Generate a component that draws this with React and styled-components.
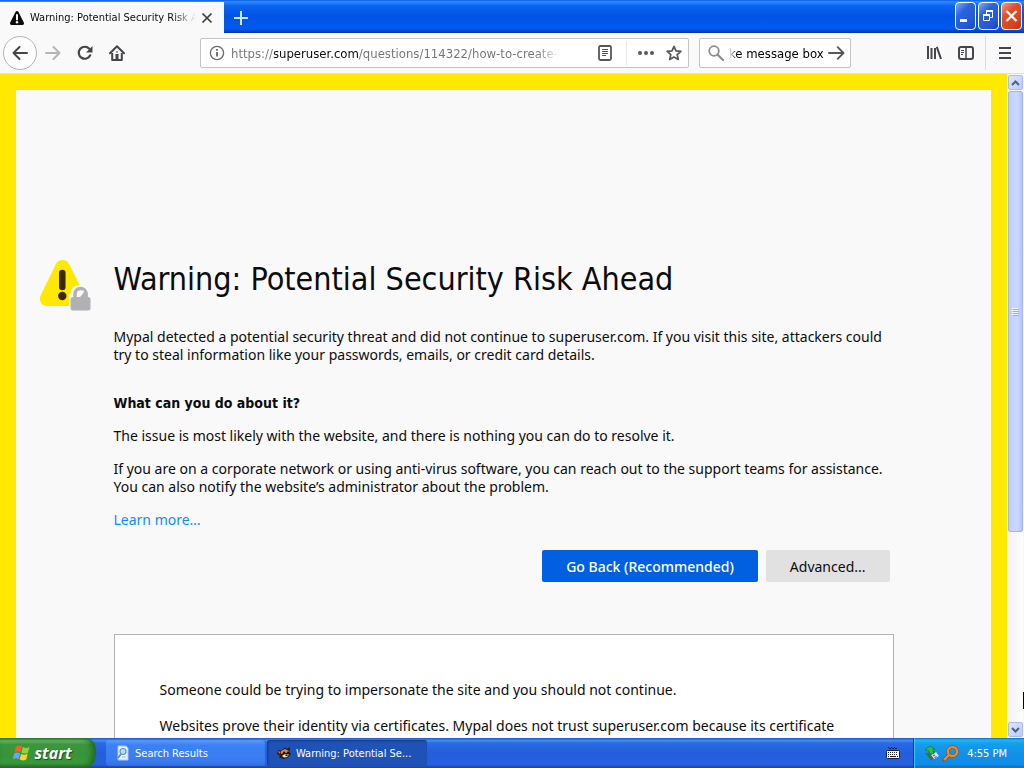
import styled, { createGlobalStyle } from "styled-components";

function App() {
  return (
    <Desktop>
      <GlobalStyle />
      <TitleBar>
        <Tab>
          <AlertIcon />
          <TabTitle>Warning: Potential Security Risk Ahead</TabTitle>
          <TabClose aria-label="Close tab">
            <svg width="12" height="12" viewBox="0 0 12 12">
              <path d="M1.5 1.5l9 9M10.5 1.5l-9 9" stroke="#3c3c40" strokeWidth="1.7" />
            </svg>
          </TabClose>
        </Tab>
        <NewTab aria-label="New tab">
          <svg width="14" height="14" viewBox="0 0 14 14">
            <path d="M7 0v14M0 7h14" stroke="#cfe6ff" strokeWidth="2" />
          </svg>
        </NewTab>
        <WindowButtons>
          <WindowButton aria-label="Minimize">
            <svg width="19" height="26" viewBox="0 0 19 26">
              <path d="M4 17.500h7" stroke="#fff" strokeWidth="3" />
            </svg>
          </WindowButton>
          <WindowButton aria-label="Restore">
            <svg width="19" height="26" viewBox="0 0 19 26" fill="none" stroke="#fff">
              <path d="M7.5 11V8.5h6v6H11" />
              <path d="M7 8h7" strokeWidth="2" />
              <path d="M4.500 11.500h6v6h-6z" />
              <path d="M4 12h7" strokeWidth="2" />
            </svg>
          </WindowButton>
          <WindowButton aria-label="Close" $close>
            <svg width="19" height="26" viewBox="0 0 19 26">
              <path d="M4.500 8l10 10M14.500 8l-10 10" stroke="#fff" strokeWidth="2.200" />
            </svg>
          </WindowButton>
        </WindowButtons>
      </TitleBar>

      <Toolbar>
        <BackButton aria-label="Back">
          <svg width="18" height="16" viewBox="0 0 18 16" fill="none" stroke="#46464a" strokeWidth="2">
            <path d="M16 8H2.500M8.500 2L2.500 8l6 6" strokeLinecap="round" strokeLinejoin="round" />
          </svg>
        </BackButton>
        <ToolButton aria-label="Forward">
          <svg width="18" height="16" viewBox="0 0 18 16" fill="none" stroke="#b5b5b7" strokeWidth="2">
            <path d="M2 8h13.500M9.500 2l6 6-6 6" strokeLinecap="round" strokeLinejoin="round" />
          </svg>
        </ToolButton>
        <ToolButton aria-label="Reload">
          <svg width="16" height="16" viewBox="0 0 16 16" fill="none">
            <path d="M13.200 10.300A6 6 0 1 1 12.300 3.800" stroke="#46464a" strokeWidth="2.200" strokeLinecap="round" />
            <path d="M15.500 1v6.500H9z" fill="#46464a" />
          </svg>
        </ToolButton>
        <ToolButton aria-label="Home">
          <svg width="16" height="16" viewBox="0 0 16 16" fill="none" stroke="#46464a">
            <path d="M1 8.200L8 1.300l7 6.900" strokeWidth="2" strokeLinecap="round" strokeLinejoin="round" />
            <path d="M3.200 8v7h9.600V8" strokeWidth="2" strokeLinejoin="round" />
            <path d="M6.500 9h3v6h-3z" fill="#46464a" stroke="none" />
            <path d="M7 7h2" />
          </svg>
        </ToolButton>
        <Spacer />
        <UrlBar>
          <FieldButton aria-label="Site information">
            <svg width="16" height="16" viewBox="0 0 16 16" fill="none" stroke="#6b6b6f">
              <circle cx="8" cy="8" r="6.600" strokeWidth="1.300" />
              <path d="M8 7v4.500M8 4v1.700" strokeWidth="1.900" />
            </svg>
          </FieldButton>
          <UrlInput aria-label="Address" defaultValue="https://superuser.com/questions/114322/how-to-create-a-fake-message-box" />
          <FieldButton aria-label="Reader view" $wide>
            <svg width="16" height="16" viewBox="0 0 16 16" fill="none" stroke="#58585c">
              <rect x="2" y="1" width="12" height="14" rx="1.500" strokeWidth="1.800" />
              <path d="M5 4.500h6M5 6.500h6M5 8.500h6M5 10.500h4" />
            </svg>
          </FieldButton>
          <FieldDivider />
          <FieldButton aria-label="Page actions">
            <svg width="18" height="6" viewBox="0 0 18 6" fill="#58585c">
              <circle cx="3" cy="3" r="2" />
              <circle cx="9" cy="3" r="2" />
              <circle cx="15" cy="3" r="2" />
            </svg>
          </FieldButton>
          <FieldButton aria-label="Bookmark this page">
            <svg width="16" height="16" viewBox="0 0 16 16">
              <path
                d="M8 1.300l2 4.500 4.900.5-3.700 3.300 1.100 4.900L8 12l-4.300 2.500 1.100-4.900L1.100 6.300 6 5.800z"
                fill="none"
                stroke="#58585c"
                strokeWidth="1.700"
                strokeLinejoin="round"
              />
            </svg>
          </FieldButton>
        </UrlBar>
        <SearchBar>
          <svg width="16" height="16" viewBox="0 0 16 16" fill="none" stroke="#8c8c90">
            <circle cx="6" cy="6" r="4.800" strokeWidth="1.800" />
            <path d="M9.500 9.500l5.500 5.500" strokeWidth="2.200" strokeLinecap="round" />
          </svg>
          <SearchInput aria-label="Search" defaultValue="ke message box" />
          <SearchGo aria-label="Go">
            <svg width="17" height="14" viewBox="0 0 17 14" fill="none" stroke="#58585c" strokeWidth="1.900">
              <path d="M1 7h14.500M9.700 1.200L15.500 7l-5.800 5.800" strokeLinecap="round" strokeLinejoin="round" />
            </svg>
          </SearchGo>
        </SearchBar>
        <Spacer />
        <ToolButton aria-label="Library">
          <svg width="16" height="16" viewBox="0 0 16 16" stroke="#46464a" strokeWidth="2" fill="none">
            <path d="M2 1v13M5.500 3v11M9 3v11M10.800 1.800L15 14" />
          </svg>
        </ToolButton>
        <ToolButton aria-label="Sidebars">
          <svg width="16" height="14" viewBox="0 0 16 14" stroke="#46464a" fill="none">
            <rect x="1" y="1" width="14" height="12" rx="2" strokeWidth="2" />
            <path d="M8 1v12" strokeWidth="1.500" />
            <path d="M3 4.500h3M3 6.500h3M3 8.500h2" />
          </svg>
        </ToolButton>
        <ToolDivider />
        <ToolButton aria-label="Menu">
          <svg width="14" height="12" viewBox="0 0 14 12" stroke="#46464a" strokeWidth="2">
            <path d="M1 1h12M1 6h12M1 11h12" />
          </svg>
        </ToolButton>
      </Toolbar>

      <Viewport>
        <Page>
          <IconCell>
            <InsecureIcon />
          </IconCell>
          <Content>
            <Title>Warning: Potential Security Risk Ahead</Title>
            <Text>
              Mypal detected a potential security threat and did not continue to superuser.com. If you
              visit this site, attackers could try to steal information like your passwords, emails, or
              credit card details.
            </Text>
            <Subtitle>What can you do about it?</Subtitle>
            <Text>The issue is most likely with the website, and there is nothing you can do to resolve it.</Text>
            <Text>
              If you are on a corporate network or using anti-virus software, you can reach out to the
              support teams for assistance. You can also notify the website’s administrator about the
              problem.
            </Text>
            <LearnMore href="#learn-more">Learn more…</LearnMore>
            <ButtonRow>
              <PageButton $primary>Go Back (Recommended)</PageButton>
              <PageButton>Advanced...</PageButton>
            </ButtonRow>
            <AdvancedPanel>
              <Text>Someone could be trying to impersonate the site and you should not continue.</Text>
              <Text>
                Websites prove their identity via certificates. Mypal does not trust superuser.com because
                its certificate issuer is unknown, the certificate is self-signed, or the server is not
                sending the correct intermediate certificates.
              </Text>
            </AdvancedPanel>
          </Content>
        </Page>
        <ScrollBar>
          <ScrollButton aria-label="Scroll up">
            <svg width="9" height="6" viewBox="0 0 9 6">
              <path d="M1 5l3.500-3.500L8 5" fill="none" stroke="#4d6185" strokeWidth="2" />
            </svg>
          </ScrollButton>
          <ScrollTrack>
            <ScrollThumb>
              <svg width="7" height="8" viewBox="0 0 7 8">
                <path d="M0 .5h6M0 2.500h6M0 4.500h6M0 6.500h6" stroke="#eef4fe" />
                <path d="M1 1.500h6M1 3.500h6M1 5.500h6M1 7.500h6" stroke="#8cb0f8" />
              </svg>
            </ScrollThumb>
          </ScrollTrack>
          <ScrollButton aria-label="Scroll down">
            <svg width="9" height="6" viewBox="0 0 9 6">
              <path d="M1 1l3.500 3.500L8 1" fill="none" stroke="#4d6185" strokeWidth="2" />
            </svg>
          </ScrollButton>
          <EdgeMark />
        </ScrollBar>
      </Viewport>

      <TaskBar>
        <StartButton>
          <WindowsLogo />
          start
        </StartButton>
        <TaskItem>
          <SearchDocIcon />
          Search Results
        </TaskItem>
        <TaskItem $active>
          <MypalIcon />
          Warning: Potential Se...
        </TaskItem>
        <LanguageBar>
          <KeyboardIcon />
        </LanguageBar>
        <Tray>
          <UsbIcon />
          <MagnifierIcon />
          <Clock>4:55 PM</Clock>
        </Tray>
      </TaskBar>
    </Desktop>
  );
}
export default App;

function AlertIcon() {
  return (
    <svg width="16" height="16" viewBox="0 0 16 16">
      <path d="M8 1c.7 0 1.200.4 1.500 1l5.300 10.600c.6 1.200-.1 2.400-1.400 2.400H2.600c-1.300 0-2-1.200-1.400-2.400L6.500 2C6.800 1.400 7.300 1 8 1z" fill="#0c0c0d" />
      <path d="M8 5v4.500" stroke="#fff" strokeWidth="2" strokeLinecap="round" />
      <circle cx="8" cy="12.300" r="1.200" fill="#fff" />
    </svg>
  );
}

function InsecureIcon() {
  return (
    <svg width="51" height="53" viewBox="0 0 51 53">
      <path d="M22.500 1c3 0 5.300 1.500 6.700 4.200L44.500 36c2.600 5.500-.8 11-6.500 11H7C1.300 47-1.600 41.500.8 36L15.800 5.200C17.200 2.500 19.500 1 22.500 1z" fill="#ffe900" />
      <path d="M22.300 14v14" stroke="#3e2800" strokeWidth="6.500" strokeLinecap="round" />
      <circle cx="22.300" cy="37" r="4.200" fill="#3e2800" />
      <path d="M29 53V37c0-1.700.8-2.500 2-3 0-5 3-8 9.500-8H51v27z" fill="#f9f9fa" />
      <path d="M35 39v-4a5.500 5.500 0 0 1 11 0v4" fill="none" stroke="#b1b1b3" strokeWidth="3.500" />
      <path d="M40 38l5-6 2.500 1v5z" fill="#b1b1b3" />
      <path d="M39 37.500l4.500-6" stroke="#f9f9fa" strokeWidth="1.500" />
      <rect x="30.500" y="38" width="20" height="13.500" rx="2.500" fill="#b1b1b3" />
    </svg>
  );
}

function WindowsLogo() {
  return (
    <svg width="18" height="18" viewBox="0 0 18 18">
      <path d="M3 2.500c2-1.300 4-1.200 6 0L7.500 8.300c-2-1.100-4-1.200-6 .1z" fill="#f0602a" />
      <path d="M9.800 3c2 1.200 4.200 1.200 6.700 0L15 8.700c-2.500 1.200-4.600 1.200-6.600.1z" fill="#8fd23c" />
      <path d="M1.200 9.500c2-1.300 4-1.200 6-.1l-1.500 5.700c-2-1.100-4-1.100-6 .1z" fill="#6ba3f5" />
      <path d="M8.100 9.900c2 1.100 4.100 1.100 6.600-.1l-1.500 5.700c-2.500 1.200-4.600 1.200-6.600.1z" fill="#fcd22c" />
    </svg>
  );
}

function SearchDocIcon() {
  return (
    <svg width="16" height="16" viewBox="0 0 16 16">
      <path d="M3 1h8l2 2v12H3z" fill="#f0f6ff" stroke="#a8c4ec" />
      <circle cx="8" cy="6.500" r="3" fill="#b9dcfa" stroke="#5d8fd0" strokeWidth="1.200" />
      <path d="M6 9l-3 4" stroke="#5d8fd0" strokeWidth="1.800" />
      <path d="M7 12h4" stroke="#8fb0df" />
    </svg>
  );
}

function MypalIcon() {
  return (
    <svg width="16" height="16" viewBox="0 0 16 16">
      <path d="M2 5.500L6 5l3-2.500L11 4l3-2-.5 5 1.500 2-3 3.500-4 1.500-5-1.500 1-2-3-1.500z" fill="#2b1b10" />
      <path d="M5 6l4-2 4 2-1.500 2-3-.5L5 9z" fill="#cf8b45" />
      <path d="M6 11l3-2 4 .5-2 2.500-3 .5z" fill="#f3e3cb" />
      <path d="M2 6l3 1-2 2z" fill="#e06b25" />
      <circle cx="8" cy="7.500" r="1" fill="#110b08" />
      <circle cx="12" cy="7.500" r="1" fill="#110b08" />
      <path d="M9.500 9.500h2v1.500h-2z" fill="#110b08" />
    </svg>
  );
}

function KeyboardIcon() {
  return (
    <svg width="14" height="14" viewBox="0 0 14 14">
      <path d="M2 1.500h1M5 1.500h1M8 1.500h1M3 2.500h2M6 2.500h2M9 2.500h2" stroke="#0b1c46" />
      <rect x=".5" y="4.500" width="13" height="8" rx="1" fill="#f4f4ec" stroke="#10204a" />
      <path d="M2 6.500h10M2 8.500h10" stroke="#222" strokeDasharray="1 1" />
      <path d="M2 10.500h1M4 10.500h6M11 10.500h1" stroke="#222" />
    </svg>
  );
}

function UsbIcon() {
  return (
    <svg width="16" height="16" viewBox="0 0 16 16">
      <path d="M3 8l7-2 5 5-8 4.500z" fill="#50616e" />
      <path d="M7 10l5-3 3 4-5 3z" fill="#d7e2e8" />
      <path d="M9 11l2-1M10.500 12.500l2-1" stroke="#455" />
      <path d="M1 5l5-4 5 3-2 .5 1 4-4 1-1-3.500z" fill="#35bd35" stroke="#116e26" strokeWidth=".6" />
      <path d="M2 8l5 6" stroke="#217f48" strokeWidth="1.500" />
    </svg>
  );
}

function MagnifierIcon() {
  return (
    <svg width="17" height="17" viewBox="0 0 17 17" fill="none">
      <path d="M7 10l-5 5" stroke="#a84f0b" strokeWidth="3.500" strokeLinecap="round" />
      <circle cx="10.500" cy="6.500" r="4.600" stroke="#a84f0b" strokeWidth="3.200" />
      <circle cx="10.500" cy="6.500" r="4.600" stroke="#f68b24" strokeWidth="2" />
      <path d="M7.500 9.500L2 15" stroke="#f68b24" strokeWidth="2" />
    </svg>
  );
}

const GlobalStyle = createGlobalStyle`
  :root {
    --ui-font: "DejaVu Sans Condensed", "Noto Sans", sans-serif;
    --text-font: "Noto Sans", sans-serif;
    --chrome: #f9f9fa;
    --yellow: #ffe900;
  }

  * {
    box-sizing: border-box;
  }

  body {
    margin: 0;
    font-family: var(--ui-font);
    color: #0c0c0d;
  }

  button {
    display: flex;
    align-items: center;
    justify-content: center;
    margin: 0;
    padding: 0;
    border: none;
    background: none;
    font-family: inherit;
  }

  input {
    min-width: 0;
    padding: 0;
    border: none;
    outline: none;
    background: none;
    font-family: inherit;
  }

  svg {
    flex: none;
  }
`;

const Desktop = styled.div`
  display: flex;
  flex-direction: column;
  height: 100vh;
  overflow: hidden;
`;

const TitleBar = styled.header`
  flex: none;
  display: flex;
  height: 33px;
  padding-top: 2px;
  background: linear-gradient(#0a5ae8 0%, #2f8bff 5%, #0a63f0 18%, #0054e3 50%, #005af0 85%, #0049d0 94%, #00309c 100%);
`;

const Tab = styled.div`
  display: flex;
  align-items: center;
  width: 224px;
  padding: 0 11px 0 9px;
  background: var(--chrome);
`;

const TabTitle = styled.span`
  flex: 1;
  margin: 0 5px;
  overflow: hidden;
  white-space: nowrap;
  font-size: 11px;
  mask-image: linear-gradient(to left, transparent, #000 24px);
`;

const TabClose = styled.button`
  width: 12px;
  height: 12px;
`;

const NewTab = styled.button`
  width: 34px;
`;

const WindowButtons = styled.div`
  display: flex;
  gap: 2px;
  margin-left: auto;
  padding-right: 2px;
`;

const WindowButton = styled.button`
  && {
    width: 21px;
    height: 28px;
    border: 1px solid #fff;
    border-radius: 4px;
    background: ${(p) =>
      p.$close
        ? "linear-gradient(135deg, #f0a088, #e0502c 35%, #d8431c 75%, #b83410)"
        : "linear-gradient(135deg, #7fa8f8, #2a62dc 35%, #2458d6 75%, #1746b8)"};
  }
`;

const Toolbar = styled.nav`
  flex: none;
  display: flex;
  align-items: center;
  height: 41px;
  padding: 0 3px;
  background: var(--chrome);
  border-bottom: 1px solid #e6e2c4;
`;

const ToolButton = styled.button`
  width: 32px;
  height: 32px;
`;

const BackButton = styled.button`
  && {
    width: 34px;
    height: 34px;
    border: 1px solid #b4b4b6;
    border-radius: 50%;
    background: #fdfdfe;
  }
`;

const Spacer = styled.div`
  width: 67px;
`;

const ToolDivider = styled.div`
  width: 1px;
  height: 34px;
  margin: 0 3px;
  background: #dcdcde;
`;

const Field = styled.div`
  display: flex;
  align-items: center;
  height: 30px;
  border: 1px solid #c4c4c6;
  border-radius: 2px;
  background: #fff;
`;

const UrlBar = styled(Field)`
  flex: 1;
  padding-left: 2px;
`;

const FieldButton = styled.button`
  width: ${(p) => (p.$wide ? "42px" : "28px")};
  height: 28px;
`;

/* the host name is darker than the rest of the address */
const UrlInput = styled.input`
  flex: 1;
  height: 28px;
  font-size: 13px;
  color: #737377;

  && {
    background: linear-gradient(to right, #737377 43px, #0c0c0d 43px, #0c0c0d 127px, #737377 127px);
    background-clip: text;
    -webkit-text-fill-color: transparent;
  }
  mask-image: linear-gradient(to left, transparent 24px, #000 48px);
`;

const FieldDivider = styled.div`
  width: 1px;
  height: 24px;
  margin-right: 5px;
  background: #e8e8ea;
`;

const SearchBar = styled(Field)`
  width: 152px;
  margin-left: 10px;
  padding: 0 5px 0 8px;
`;

const SearchInput = styled.input`
  flex: 1;
  height: 28px;
  margin-left: 5px;
  font-size: 13px;
  mask-image: linear-gradient(to right, transparent, #000 8px);
`;

const SearchGo = styled.button`
  width: 18px;
  height: 28px;
`;

const Viewport = styled.main`
  position: relative;
  flex: 1;
  display: flex;
  min-height: 0;
  overflow: hidden;
`;

const Page = styled.div`
  flex: 1;
  align-self: flex-start;
  display: grid;
  grid-template-columns: 1fr minmax(0, 780px) 1fr;
  padding: 169px 0 60px;
  border: 16px solid var(--yellow);
  background: var(--chrome);
  font-family: var(--text-font);
`;

const IconCell = styled.div`
  display: flex;
  justify-content: flex-end;
  align-items: flex-start;
  padding-right: 23px;
`;

const Content = styled.div`
  display: flex;
  flex-direction: column;
`;

const Title = styled.h1`
  margin: 0 0 29px;
  font-family: var(--ui-font);
  font-size: 32px;
  font-weight: 400;
  line-height: 40px;
`;

const Text = styled.p`
  margin: 0 0 15px;
  font-size: 14px;
  line-height: 18px;
`;

const Subtitle = styled.h2`
  margin: 15px 0;
  font-family: var(--ui-font);
  font-size: 14px;
  font-weight: 700;
  line-height: 18px;
`;

const LearnMore = styled.a`
  align-self: flex-start;
  font-size: 14px;
  line-height: 18px;
  color: #0a8dff;
  text-decoration: none;
`;

const ButtonRow = styled.div`
  display: flex;
  justify-content: flex-end;
  gap: 8px;
  margin: 21px 4px 52px 0;
`;

const PageButton = styled.button`
  && {
    height: 32px;
    padding: 0 24px;
    border-radius: 2px;
    background: ${(p) => (p.$primary ? "#0060df" : "#e1e1e2")};
    color: ${(p) => (p.$primary ? "#fff" : "#0c0c0d")};
    font-size: 14px;
    font-weight: ${(p) => (p.$primary ? 500 : 400)};
  }
`;

const AdvancedPanel = styled.section`
  padding: 46px 45px 30px;
  border: 1px solid #b1b1b3;
  background: #fff;

  ${Text} {
    margin-bottom: 18px;
  }
`;

const ScrollBar = styled.div`
  position: relative;
  flex: none;
  display: flex;
  flex-direction: column;
  width: 17px;
  padding: 1px;
  background: #f6f6fb;
`;

const ScrollButton = styled.button`
  && {
    flex: none;
    height: 15px;
    border: 1px solid #a9bdf0;
    border-radius: 2px;
    background: linear-gradient(135deg, #dfe7ff, #b9cbf8);
  }
`;

const ScrollTrack = styled.div`
  flex: 1;
  padding: 1px 0;
  background: linear-gradient(to right, #f1f1f8, #fefefe);
`;

const ScrollThumb = styled.div`
  display: flex;
  align-items: center;
  justify-content: center;
  height: 70%;
  border: 1px solid #a3b7ee;
  border-radius: 2px;
  background: linear-gradient(to right, #c2cffb, #cad7ff 60%, #b6c6f6);
`;

const EdgeMark = styled.div`
  position: absolute;
  right: 0;
  bottom: 29px;
  width: 1px;
  height: 17px;
  background: #000;
`;

const TaskBar = styled.footer`
  flex: none;
  display: flex;
  height: 30px;
  background: linear-gradient(#1f52c8 0%, #3f8cf3 8%, #2a68e2 18%, #245edb 50%, #2560de 88%, #1941a5 100%);
`;

const StartButton = styled.button`
  && {
    width: 96px;
    margin-right: 10px;
    padding-right: 12px;
    gap: 4px;
    border-radius: 0 10px 12px 0;
    background: linear-gradient(#2c7a2c 0%, #6cbb6c 9%, #3c963c 22%, #389438 60%, #3a9a3a 85%, #246b24 100%);
    box-shadow: inset -4px 0 6px #1f6a22;
    color: #fff;
    font-family: "Open Sans", sans-serif;
    font-size: 16px;
    font-weight: 700;
    font-style: italic;
    text-shadow: 1px 1px 1px #1d4a1d;
  }
`;

const TaskItem = styled.button`
  && {
    justify-content: flex-start;
    gap: 4px;
    width: 160px;
    height: 26px;
    margin: 2px 1px 0 0;
    padding: 0 9px;
    border-radius: 3px;
    background: ${(p) => (p.$active ? "#1e52b7" : "linear-gradient(#5a9cff, #3c81f3 20%, #3a7cf0 80%, #3070e0)")};
    box-shadow: ${(p) => (p.$active ? "inset 1px 1px 2px #123a88" : "inset -1px 0 1px #2a62cc")};
    color: #fff;
    font-size: 11px;
    white-space: nowrap;
  }
`;

const LanguageBar = styled.div`
  display: flex;
  align-items: center;
  margin-left: auto;
  padding-right: 13px;
`;

const Tray = styled.div`
  display: flex;
  align-items: center;
  gap: 2px;
  padding: 0 17px 0 10px;
  border-left: 1px solid #0d3c9c;
  background: linear-gradient(#0c59b9 0%, #1fb5f8 6%, #139ee9 20%, #1290e8 55%, #0d8dea 88%, #0d67b4 100%);
  box-shadow: inset 1px 0 1px #3fc6fa;
`;

const Clock = styled.span`
  margin-left: 6px;
  font-size: 11px;
  color: #fff;
`;
